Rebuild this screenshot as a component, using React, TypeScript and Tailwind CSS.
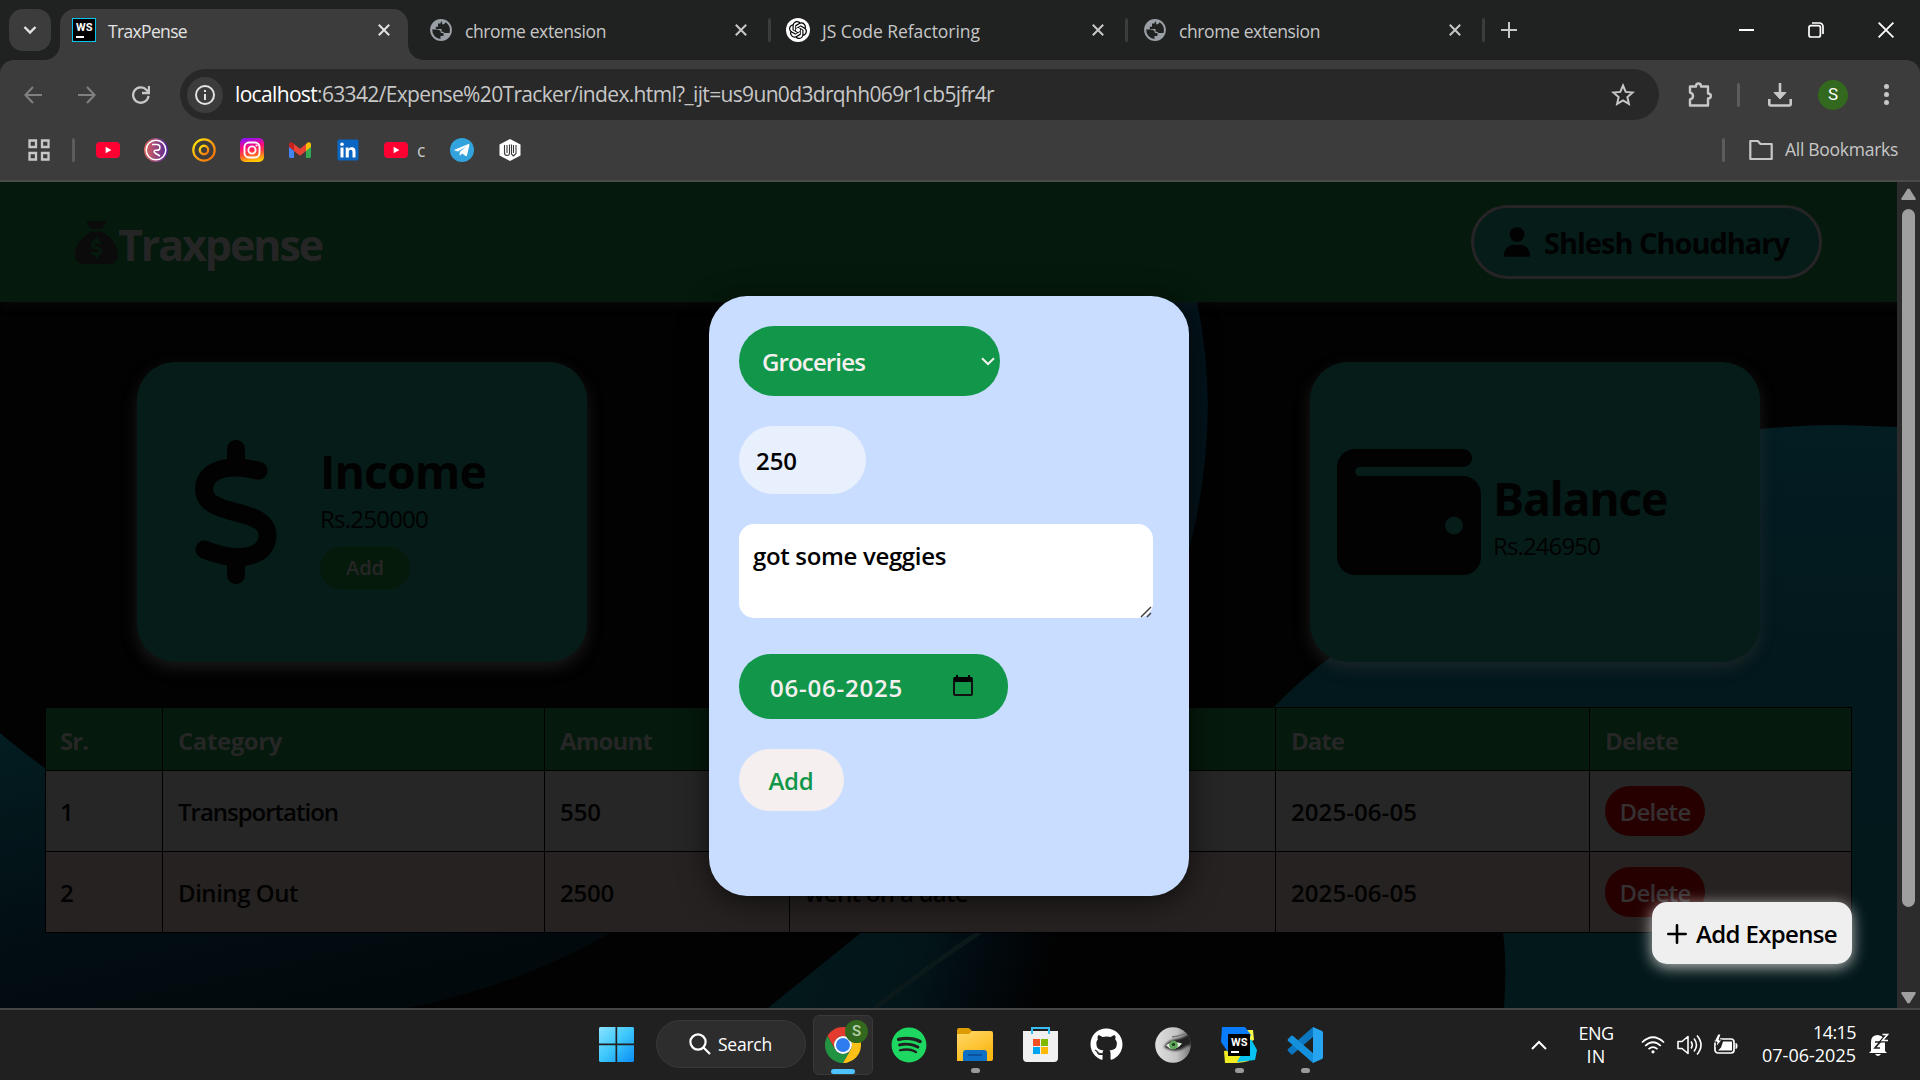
import React, { useLayoutEffect, useRef, useState } from "react";
import { FaSackDollar, FaDollarSign, FaWallet, FaUser, FaSpotify, FaGithub } from "react-icons/fa6";
import { SiOpenai } from "react-icons/si";

/** One line of text, tracked so that it fills the given width. */
function Line({ w, className = "", children }: { w: number; className?: string; children: React.ReactNode }) {
  const ref = useRef<HTMLSpanElement>(null);
  const [spacing, setSpacing] = useState(0);
  useLayoutEffect(() => {
    const el = ref.current;
    if (!el) return;
    const n = (el.textContent || "").length;
    if (n > 1) setSpacing((w - el.getBoundingClientRect().width) / n);
  }, [w]);
  return (
    <span className={"inline-block whitespace-nowrap " + className}>
      <span ref={ref} style={{ letterSpacing: spacing }}>
        {children}
      </span>
    </span>
  );
}

function WebStormIcon({ className }: { className: string }) {
  return (
    <span className={"flex flex-col justify-between bg-black text-white " + className}>
      <span className="font-[Roboto] text-[11px] font-bold leading-[11px]">WS</span>
      <span className="h-[2px] w-[8px] bg-white" />
    </span>
  );
}

function Globe() {
  return (
    <svg viewBox="0 0 24 24" className="size-6">
      <circle cx="12" cy="12" r="10.900" fill="#9aa0a6" />
      <path d="M3.200 11.500h4.300c2.300 0 4.500 1 4.500 3.500h2.500v3h-3v2.900a9 9 0 0 1-8.300-9.400zM12.500 3.100c-1 1.200-1 2.400-1 2.400H9v3.200H6.800v2.300h5.700v2.500c1.500 0 2.500.8 3 1.500h5c.3-1 .4-2 .4-3a9 9 0 0 0-4.400-7.700c-.3 1.200-1.500 2.200-3 2.200z" fill="#202221" />
    </svg>
  );
}

function Cross({ className }: { className: string }) {
  return (
    <svg viewBox="0 0 12 12" className={className} fill="none" stroke="currentColor">
      <path d="M.8.8l10.4 10.4M11.2.8L.8 11.2" strokeWidth="2" />
    </svg>
  );
}

function Tab({ icon, title, w, active = false, sep = false }: { icon: React.ReactNode; title: string; w: number; active?: boolean; sep?: boolean }) {
  return (
    <div className={"relative flex h-[51px] w-[348px] shrink-0 items-center pl-3 " + (active ? "rounded-t-[15px] bg-[#3c3c3c] text-[#e3e3e3]" : "text-[#c7c7c7]")}>
      <span className="-mt-[9px] flex size-6 items-center justify-center">{icon}</span>
      <Line w={w} className="-mt-[7px] ml-3 w-[260px] text-[17.5px] leading-6">{title}</Line>
      <Cross className="-mt-[9px] ml-[10px] size-3" />
      {active && (
        <>
          <span className="absolute bottom-0 -left-[15px] size-[15px] bg-[radial-gradient(circle_at_0_0,transparent_14.5px,#3c3c3c_15px)]" />
          <span className="absolute -right-[15px] bottom-0 size-[15px] bg-[radial-gradient(circle_at_100%_0,transparent_14.5px,#3c3c3c_15px)]" />
        </>
      )}
      {sep && <span className="absolute -right-[6px] top-[9px] h-6 w-[3px] rounded bg-[#3c3c3c]" />}
    </div>
  );
}

function TabStrip() {
  return (
    <div className="flex h-[60px] items-end bg-[#202221] pl-[9px] pr-[26px]">
      <div className="mb-[9px] mr-[9px] flex size-[42px] items-center justify-center rounded-[14px] bg-[#3c3c3c]">
        <svg viewBox="0 0 14 10" className="h-[10px] w-[14px]" fill="none" stroke="#e3e3e3" strokeWidth="2.4"><path d="M1.5 2L7 7.5 12.5 2" /></svg>
      </div>
      <div className="flex gap-[9px]">
        <Tab active w={79} title="TraxPense" icon={<WebStormIcon className="size-6 border border-[#07c3f2] px-[3px] pb-[3px] pt-[3px]" />} />
        <Tab sep w={141} title="chrome extension" icon={<Globe />} />
        <Tab sep w={158} title="JS Code Refactoring" icon={<span className="flex size-6 items-center justify-center rounded-full bg-white"><SiOpenai className="size-[18px] text-black" /></span>} />
        <Tab sep w={141} title="chrome extension" icon={<Globe />} />
      </div>
      <svg viewBox="0 0 16 16" className="mb-[22px] ml-[22px] size-4" stroke="#c7c7c7" strokeWidth="2"><path d="M8 0v16M0 8h16" /></svg>
      <div className="mb-[22px] ml-auto flex items-center gap-[54px]">
        <span className="h-[2px] w-[15px] bg-white" />
        <svg viewBox="0 0 16 16" className="size-4" fill="none" stroke="#fff" strokeWidth="1.7"><rect x="1" y="3.6" width="11.4" height="11.4" rx="2" /><path d="M4 1h7.5A3.5 3.5 0 0 1 15 4.500V12" /></svg>
        <svg viewBox="0 0 16 16" className="size-4" stroke="#fff" strokeWidth="1.8"><path d="M.6.6l14.800 14.800M15.400.6L.6 15.400" /></svg>
      </div>
    </div>
  );
}

function Toolbar() {
  return (
    <div className="flex h-[69px] items-center pl-6 pr-[31px]">
      <svg viewBox="0 0 18 18" className="size-[18px]" fill="none" stroke="#808080" strokeWidth="2"><path d="M18 9H1.500M9 1L1.400 9 9 17" /></svg>
      <svg viewBox="0 0 18 18" className="ml-9 size-[18px]" fill="none" stroke="#808080" strokeWidth="2"><path d="M0 9h16.500M9 1l7.600 8L9 17" /></svg>
      <svg viewBox="0 0 18 18" className="ml-9 size-[18px]" fill="none" stroke="#c7c7c7" strokeWidth="2.300"><path d="M16.500 9.800A7.700 7.700 0 1 1 14.600 3.900L16.500 6" /><path d="M17 0v7h-7" /></svg>
      <div className="ml-[30px] flex h-[51px] w-[1479px] items-center rounded-full bg-[#282828] pl-2">
        <span className="-ml-[1px] flex size-9 items-center justify-center rounded-full bg-[#3c3c3c]">
          <svg viewBox="0 0 20 20" className="size-5" fill="none" stroke="#e3e3e3" strokeWidth="2"><circle cx="10" cy="10" r="9" /><path d="M10 9v6M10 5v2" /></svg>
        </span>
        <Line w={759} className="-mt-[1px] ml-3 text-[21px] leading-7 text-[#c7c7c7]"><b className="font-normal text-white">localhost</b>:63342/Expense%20Tracker/index.html?_ijt=us9un0d3drqhh069r1cb5jfr4r</Line>
        <svg viewBox="0 0 24 24" className="ml-auto mr-6 size-6" fill="none" stroke="#c7c7c7" strokeWidth="2"><path d="M12 2.500l2.700 6.400 6.900.6-5.200 4.600 1.500 6.800-5.900-3.600-5.900 3.600 1.500-6.800-5.200-4.600 6.900-.6z" /></svg>
      </div>
      <svg viewBox="0 0 26 26" className="ml-[28px] size-[26px]" fill="none" stroke="#c7c7c7" strokeWidth="2.400"><path d="M3 4.500h6c0-4 5-4 5 0h7v7c3.800 0 3.800 5 0 5v7H3v-6c4-1 4-6 0-7z" strokeLinejoin="round" /></svg>
      <span className="ml-[24px] h-6 w-[3px] rounded bg-[#5c5c5c]" />
      <svg viewBox="0 0 24 24" className="ml-[28px] size-6" fill="none" stroke="#c7c7c7" strokeWidth="2.600"><path d="M12 0v14" /><path d="M6 9.500h12l-6 6.500z" fill="#c7c7c7" strokeWidth="1" /><path d="M1.300 16v5q0 1.500 1.500 1.500h18.400q1.500 0 1.500-1.500v-5" /></svg>
      <span className="ml-[26px] flex size-[30px] items-center justify-center rounded-full bg-[#33691e] font-[Roboto] text-[17px] text-white">S</span>
      <span className="ml-auto flex flex-col gap-[3px]">
        <i className="size-[5px] rounded-full bg-[#c7c7c7]" /><i className="size-[5px] rounded-full bg-[#c7c7c7]" /><i className="size-[5px] rounded-full bg-[#c7c7c7]" />
      </span>
    </div>
  );
}

function YouTube() {
  return (
    <svg viewBox="0 0 24 24" className="size-6"><rect y="4" width="24" height="16" rx="4" fill="#ff0033" /><path d="M9.600 8.700v6.600l5.800-3.300z" fill="#fff" /></svg>
  );
}

function Bookmarks() {
  return (
    <div className="flex h-[42px] items-center pl-7 pr-[22px]">
      <svg viewBox="0 0 22 22" className="size-[22px]" fill="none" stroke="#c7c7c7" strokeWidth="2.300"><path d="M1.500 1.500h6.500v6.500H1.500zM14 1.500h6.500v6.500H14zM1.500 14h6.500v6.500H1.500zM14 14h6.500v6.500H14z" /></svg>
      <span className="ml-[22px] h-6 w-[3px] rounded bg-[#5c5c5c]" />
      <div className="ml-[21px] flex items-center gap-6">
        <YouTube />
        <svg viewBox="0 0 24 24" className="size-6">
          <defs><linearGradient id="bmR"><stop stopColor="#e2675c" /><stop offset="1" stopColor="#52269b" /></linearGradient></defs>
          <circle cx="12" cy="12" r="12" fill="url(#bmR)" />
          <g fill="none" stroke="#fff" strokeWidth="1.500"><circle cx="12" cy="12" r="9.800" /><path d="M8 6.500h5a2.900 2.900 0 0 1 0 5.800h-1.500c-1.500 0-2 1.700-.5 2.700l5 3" /></g>
        </svg>
        <svg viewBox="0 0 24 24" className="size-6" fill="none">
          <defs><linearGradient id="bmO" x2="1" y2="1"><stop stopColor="#fff200" /><stop offset=".5" stopColor="#fba014" /><stop offset="1" stopColor="#f06a00" /></linearGradient></defs>
          <circle cx="12" cy="12" r="10.700" stroke="url(#bmO)" strokeWidth="2.200" /><circle cx="12" cy="12" r="4.200" stroke="url(#bmO)" strokeWidth="2.400" />
        </svg>
        <svg viewBox="0 0 24 24" className="size-6" fill="none">
          <defs><linearGradient id="bmI" x1=".2" y1="0" x2=".4" y2="1"><stop stopColor="#8a12ff" /><stop offset=".4" stopColor="#ff0a78" /><stop offset=".7" stopColor="#ff5430" /><stop offset="1" stopColor="#ffc800" /></linearGradient></defs>
          <rect width="24" height="24" rx="5" fill="url(#bmI)" />
          <g stroke="#fff" strokeWidth="1.900"><rect x="4.500" y="4.500" width="15" height="15" rx="4.500" /><circle cx="12" cy="12" r="3.600" /></g><circle cx="16.500" cy="7.500" r="1.100" fill="#fff" />
        </svg>
        <svg viewBox="0 0 24 24" className="size-6">
          <path d="M1 7v11.500c0 .8.700 1.500 1.500 1.500H6V9.500z" fill="#4285f4" /><path d="M23 7v11.500c0 .8-.7 1.500-1.500 1.500H18V9.500z" fill="#34a853" />
          <path d="M18 6l1.500-1.200C21 3.700 23 4.700 23 6.500V9l-5 4z" fill="#fbbc04" /><path d="M1 6.500C1 4.700 3 3.700 4.500 4.800L6 6v7L1 9z" fill="#c5221f" /><path d="M6 13V6l6 4.800L18 6v7l-6 4.800z" fill="#ea4335" />
        </svg>
        <svg viewBox="0 0 24 24" className="size-6">
          <rect x="1.500" y="1.500" width="21" height="21" rx="1.500" fill="#0a66c2" /><g fill="#fff"><rect x="4.500" y="9.500" width="3" height="10" /><circle cx="6" cy="6.200" r="1.800" /><path d="M9.700 9.500h2.900v1.400c.6-1 1.700-1.700 3.100-1.700 3 0 3.800 1.900 3.800 4.700v5.600h-3v-5c0-1.400-.2-2.700-1.800-2.700-1.500 0-1.900 1.200-1.900 2.600v5.100H9.700z" /></g>
        </svg>
        <span className="flex items-center"><YouTube /><span className="ml-[9px] w-[9px] text-[17.5px] leading-6 text-[#c7c7c7]">c</span></span>
        <svg viewBox="0 0 24 24" className="size-6"><circle cx="12" cy="12" r="12" fill="#32a3dc" /><path d="M4.500 11.800L18.500 6c.7-.2 1 .2.900.9L17 17.500c-.2.7-.7.900-1.300.6l-3.600-2.700-1.800 1.800c-.4.400-.7.200-.8-.2l.4-3.300L16 8.500l-8 5-3.300-1c-.5-.2-.6-.5-.2-.7z" fill="#fff" /></svg>
        <svg viewBox="0 0 24 24" className="size-6"><path d="M12 1l10.500 5.500v11L12 23 1.500 17.500v-11z" fill="#fff" /><path d="M6.500 7v7.500q0 3 2.500 3t2.500-2.500V6.500M9 7v8M13.500 6.500V16l2 2 2.500-2.500V7M15.500 7v8" fill="none" stroke="#3a3a3a" strokeWidth="1.100" /></svg>
      </div>
      <span className="ml-auto h-6 w-[3px] rounded bg-[#5c5c5c]" />
      <svg viewBox="0 0 24 22" className="ml-6 h-[22px] w-6" fill="none" stroke="#c7c7c7" strokeWidth="2.200" strokeLinejoin="round"><path d="M1.300 2h7.500l2.700 3h11.200v15H1.300z" /></svg>
      <Line w={113} className="-mt-[2px] ml-3 w-[113px] text-[17.5px] leading-6 text-[#c7c7c7]">All Bookmarks</Line>
    </div>
  );
}

function Backdrop() {
  return (
    <svg viewBox="0 182 1897 826" className="absolute inset-0 h-[826px] w-[1897px]">
      <defs>
        <linearGradient id="bgA" x1="0" y1="0" x2=".5" y2="1"><stop stopColor="#031d20" /><stop offset=".3" stopColor="#03161a" /><stop offset=".65" stopColor="#020d13" /><stop offset="1" stopColor="#02090c" /></linearGradient>
        <linearGradient id="bgB" gradientUnits="userSpaceOnUse" x1="820" y1="932" x2="1040" y2="1000"><stop stopColor="#03181b" /><stop offset=".45" stopColor="#031519" /><stop offset=".65" stopColor="#020c12" /><stop offset="1" stopColor="#020202" /></linearGradient>
        <linearGradient id="bgC" x2="0" y2="1"><stop stopColor="#031d22" /><stop offset=".4" stopColor="#03181c" /><stop offset="1" stopColor="#03181a" /></linearGradient>
      </defs>
      <path d="M0 733Q20 750 46 769L80 800V932H612Q520 985 408 1008H0Z" fill="url(#bgA)" />
      <path d="M862 932L768 1008H1030L1080 932Z" fill="url(#bgB)" />
      <path d="M980 932Q930 965 875 1008" stroke="#0b191a" strokeWidth="5" fill="none" />
      <path d="M1274 707Q1300 680 1332 656Q1520 510 1760 429Q1800 425 1840 425L1897 427V1008H1504Q1507 960 1503 932V707Z" fill="url(#bgC)" />
      <path d="M1170 302H1197Q1222 420 1189 550L1170 600Z" fill="#03131a" />
    </svg>
  );
}

function Header() {
  return (
    <header className="relative flex h-[120px] items-center justify-between bg-[#05190c] pl-[75px] pr-[75px] shadow-[0_4px_10px_rgba(40,40,40,0.2)]">
      <div className="flex items-center">
        <FaSackDollar className="size-[43px] text-[#0b0b0b]" />
        <Line w={204} className="mt-[5px] text-[43px] font-bold leading-[60px] text-[#262526]">Traxpense</Line>
      </div>
      <div className="flex h-[74px] w-[351px] items-center rounded-[37px] border-[3px] border-[#262426] bg-[#061c19] pl-[30px] text-[#020202]">
        <FaUser className="h-[30px] w-[26px]" />
        <Line w={245} className="ml-[14px] mt-[2px] text-[29px] font-bold leading-10">Shlesh Choudhary</Line>
      </div>
    </header>
  );
}

function Card({ icon, title, w, amount, aw, action = false }: { icon: React.ReactNode; title: string; w: number; amount: string; aw: number; action?: boolean }) {
  return (
    <section className="flex h-[300px] w-[450px] items-center gap-3 rounded-[38px] bg-[#061c19] pl-[27px] text-[#020202] shadow-[0_6px_16px_rgba(60,58,58,0.42)]">
      <span className="flex size-36 items-center justify-center">{icon}</span>
      <div className="flex flex-col items-start">
        <Line w={w} className="mt-[4px] text-[46.5px] font-bold leading-[62px]">{title}</Line>
        <Line w={aw} className="text-[24px] leading-[33px]">{amount}</Line>
        {action && (
          <button className="mt-[12px] flex h-[42px] w-[90px] items-center justify-center rounded-[21px] bg-[#061a0c]">
            <Line w={38} className="text-[20px] font-semibold leading-7 text-[#262626]">Add</Line>
          </button>
        )}
      </div>
    </section>
  );
}

const rows = [
  { sr: "1", category: "Transportation", cw: 160, amount: "550", aw: 41, note: "", date: "2025-06-05", bg: "bg-[#262626]" },
  { sr: "2", category: "Dining Out", cw: 120, amount: "2500", aw: 54, note: "went on a date", date: "2025-06-05", bg: "bg-[#262221]" },
];

function ExpenseTable() {
  const cols = "grid grid-cols-[117px_382px_245px_486px_314px_261px] divide-x divide-black";
  return (
    <div className="ml-[45px] w-[1807px] border border-black text-[24px]">
      <div className={cols + " h-[62px] bg-[#05190c] font-bold text-[#262626] *:flex *:items-center *:pl-[15px] *:pt-[3px]"}>
        <div><Line w={28} className="-ml-px">Sr.</Line></div>
        <div><Line w={104}>Category</Line></div>
        <div><Line w={92}>Amount</Line></div>
        <div><Line w={130}>Description</Line></div>
        <div><Line w={53}>Date</Line></div>
        <div><Line w={73}>Delete</Line></div>
      </div>
      {rows.map((r) => (
        <div key={r.sr} className={cols + " h-[81px] border-t border-black font-semibold text-[#020202] *:flex *:items-center *:pl-[15px] *:pt-[2px] " + r.bg}>
          <div><span className="-ml-px">{r.sr}</span></div>
          <div><Line w={r.cw}>{r.category}</Line></div>
          <div><Line w={r.aw}>{r.amount}</Line></div>
          <div><Line w={163}>{r.note}</Line></div>
          <div><Line w={126}>{r.date}</Line></div>
          <div>
            <button className="mb-[2px] flex h-[50px] w-[100px] items-center justify-center rounded-[25px] bg-[#260000]">
              <Line w={71} className="mt-[2px] font-semibold text-[#353031]">Delete</Line>
            </button>
          </div>
        </div>
      ))}
    </div>
  );
}

function ExpenseForm() {
  return (
    <form className="absolute left-[709px] top-[114px] flex h-[600px] w-[480px] flex-col items-start rounded-[38px] bg-[#c8ddff] pl-[30px] pt-[30px] text-[24px] font-semibold shadow-[0_6px_30px_rgba(0,0,0,0.6)]">
      <div className="flex h-[70px] w-[261px] items-center rounded-[35px] bg-[#12974a] pl-[23px] pt-[2px] text-[#f5f0ef]">
        <Line w={103}>Groceries</Line>
        <svg viewBox="0 0 14 9" className="-mt-[2px] ml-auto mr-[5px] h-[9px] w-[14px]" fill="none" stroke="#f5f0ef" strokeWidth="2"><path d="M1 1.300l6 5.700 6-5.700" /></svg>
      </div>
      <div className="mt-[30px] flex h-[68px] w-[127px] items-center rounded-[34px] bg-[#e8f0fe] pl-[17px] pt-[2px] text-black"><Line w={41}>250</Line></div>
      <div className="relative mt-[30px] h-[94px] w-[414px] rounded-[15px] bg-white pl-[14px] pt-[15px] leading-[33px] text-black">
        <Line w={193}>got some veggies</Line>
        <svg viewBox="0 0 12 12" className="absolute bottom-0 right-[1px] size-3" stroke="#444" strokeWidth="1.500"><path d="M1 11L11 1M7 11l4-4" /></svg>
      </div>
      <div className="mt-[36px] flex h-[65px] w-[269px] items-center rounded-[32px] bg-[#12974a] pl-[31px] pt-[2px] text-[#f5f0ef]">
        <Line w={133}>06-06-2025</Line>
        <svg viewBox="0 0 20 21" className="-mt-[4px] ml-auto mr-[35px] h-[21px] w-5"><rect x="1" y="3" width="18" height="17" rx="1" fill="none" stroke="#111" strokeWidth="2" /><path d="M1 2h18v5H1zM3 0h2v3H3zM15 0h2v3h-2z" fill="#000" /></svg>
      </div>
      <button className="mt-[30px] flex h-[62px] w-[105px] items-center justify-center rounded-[31px] bg-[#f5f0ef] pr-px pt-[2px] font-semibold text-[#12974a]"><Line w={45}>Add</Line></button>
    </form>
  );
}

function Scrollbar() {
  return (
    <div className="flex h-[826px] w-[23px] flex-col items-center bg-[#2c2c2c] pb-[4px] pt-[6px]">
      <svg viewBox="0 0 15 12" className="h-3 w-[15px]" fill="#9f9f9f"><path d="M6.500.8h2L15 11l-1 1H1l-1-1z" /></svg>
      <span className="mt-[9px] h-[698px] w-[13px] rounded-full bg-[#9f9f9f]" />
      <svg viewBox="0 0 15 12" className="mt-auto h-3 w-[15px]" fill="#9f9f9f"><path d="M6.500 11.200h2L15 1l-1-1H1L0 1z" /></svg>
    </div>
  );
}

function Slot({ children, dot = false }: { children: React.ReactNode; dot?: boolean }) {
  return (
    <div className="relative flex h-full w-[66px] items-center justify-center pb-px">
      {children}
      {dot && <span className="absolute bottom-[7px] h-[5px] w-[9px] rounded-full bg-[#9a9a9a]" />}
    </div>
  );
}

function Taskbar() {
  return (
    <footer className="flex h-[72px] border-t-2 border-[#464646] bg-[#202020] pl-[583px] text-white">
      <Slot>
        <svg viewBox="0 0 35 35" className="size-[35px]">
          <defs><linearGradient id="win" x2="1" y2="1"><stop stopColor="#8ae3ff" /><stop offset=".5" stopColor="#3cc6fb" /><stop offset="1" stopColor="#0a8ef5" /></linearGradient></defs>
          <path d="M1 0h15.500v16.500H0V1zM18.200 0H34l1 1v15.500H18.200zM0 18.200h16.500V35H1l-1-1zM18.200 18.200H35V34l-1 1H18.200z" fill="url(#win)" />
        </svg>
      </Slot>
      <div className="ml-[7px] mt-[10px] flex h-12 w-[150px] items-center rounded-full border border-[#383838] bg-[#2d2d2d] pl-[32px]">
        <svg viewBox="0 0 22 22" className="size-[22px]" fill="none" stroke="#fff" strokeWidth="2.200"><circle cx="9" cy="9" r="7.600" /><path d="M14.500 14.500L21 21" /></svg>
        <Line w={54} className="ml-[7px] text-[17.500px] leading-6">Search</Line>
      </div>
      <div className="ml-[4px] flex h-full">
        <Slot>
          <div className="relative flex h-[60px] w-[60px] items-center justify-center rounded-md border border-[#393939] bg-[#2d2d2d]">
            <svg viewBox="2 2 44 44" className="size-9">
              <path d="M24 13H43.050A22 22 0 0 0 4.950 13L14.470 29.500A11 11 0 0 1 24 13Z" fill="#e33b2e" />
              <path d="M14.470 29.500L4.950 13A22 22 0 0 0 24 46L33.530 29.500A11 11 0 0 1 14.470 29.500Z" fill="#229342" />
              <path d="M33.530 29.500L24 46A22 22 0 0 0 43.050 13H24A11 11 0 0 1 33.530 29.500Z" fill="#fbc116" />
              <circle cx="24" cy="24" r="11" fill="#fff" /><circle cx="24" cy="24" r="8.600" fill="#2f7bf0" />
            </svg>
            <span className="absolute right-[4px] top-[4px] flex size-[23px] items-center justify-center rounded-full bg-[#33691e] font-[Roboto] text-[15px] font-medium text-[#b9d3ac]">S</span>
            <span className="absolute bottom-0 h-[5px] w-6 rounded-full bg-[#4cc2ff]" />
          </div>
        </Slot>
        <Slot><FaSpotify className="size-9 text-[#1ed760]" /></Slot>
        <Slot dot>
          <svg viewBox="0 0 36 34" className="h-[34px] w-9">
            <defs><linearGradient id="fold" y2="1" x2=".6"><stop stopColor="#ffd968" /><stop offset="1" stopColor="#fbb612" /></linearGradient></defs>
            <path d="M0 2q0-2 2-2h9q1 0 2 1l2 2h19v10H0z" fill="#dd9b04" /><path d="M0 6h12l3-3h19q2 0 2 2v26q0 2-2 2H0z" fill="url(#fold)" />
            <path d="M6 33v-8q0-3 3-3h18q3 0 3 3v8z" fill="#0f6fc4" /><path d="M11 27h14" stroke="#0a4a8c" strokeWidth="1.500" />
          </svg>
        </Slot>
        <Slot>
          <svg viewBox="0 0 35 35" className="mr-px size-[35px]">
            <path d="M9 7V1h17v6" fill="none" stroke="#38bdf2" strokeWidth="2" /><path d="M0 4h35v27q0 4-4 4H4q-4 0-4-4z" fill="#f0f0f0" />
            <path d="M9 7V4M26 7V4" stroke="#38bdf2" strokeWidth="2" />
            <rect x="10" y="12" width="7" height="7" fill="#f25022" /><rect x="18" y="12" width="7" height="7" fill="#7fba00" /><rect x="10" y="20" width="7" height="7" fill="#00a4ef" /><rect x="18" y="20" width="7" height="7" fill="#ffb900" />
          </svg>
        </Slot>
        <Slot><FaGithub className="mr-px size-[33px]" /></Slot>
        <Slot>
          <svg viewBox="0 0 36 36" className="size-9">
            <defs><clipPath id="eyeClip"><circle cx="18" cy="18" r="17.800" /></clipPath><linearGradient id="eyeBg"><stop stopColor="#e0e0e0" /><stop offset=".6" stopColor="#c4c4c4" /><stop offset="1" stopColor="#777" /></linearGradient><filter id="eyeSoft"><feGaussianBlur stdDeviation=".9" /></filter></defs>
            <g clipPath="url(#eyeClip)"><rect width="36" height="36" fill="url(#eyeBg)" /><path d="M9 20q4-7 12-8 8-1 16-7v13q-5 0-8 3-8 5-16 1z" fill="#222" filter="url(#eyeSoft)" /><path d="M17 10q10-1 18-6" stroke="#777" strokeWidth="1.500" fill="none" /><path d="M11 18.500q6-6 16-2-5 6.500-12 5z" fill="#e3f0df" /><circle cx="18.500" cy="18" r="4.400" fill="#5fa55a" /><circle cx="18.500" cy="17.500" r="1.600" fill="#183a18" /></g>
          </svg>
        </Slot>
        <Slot dot>
          <span className="relative flex size-9 items-center justify-center">
            <svg viewBox="0 0 36 36" className="absolute inset-0 size-9"><path d="M24 3h8l1 10-7 3z" fill="#fcf84a" /><path d="M3 24l16-2 9 12q-12 3-24 2z" fill="#f1ec22" /><path d="M1 0h23l6 8-9 18-14-1-7-10z" fill="#087cfa" /><path d="M30 12l6 11-2 10-18 2 8-14z" fill="#07c3f2" /></svg>
            <WebStormIcon className="relative size-[22px] p-[3px]" />
          </span>
        </Slot>
        <Slot dot>
          <svg viewBox="0 0 36 36" className="size-9"><path d="M26 0L27 9 6 27q-1 1-2 0l-3-3q-1-1 0-2z" fill="#0b77c0" /><path d="M26 36l1-9L6 9Q5 8 4 9l-3 3q-1 1 0 2z" fill="#1590dc" /><path d="M26 0l9 4q1 .5 1 2v24q0 1.500-1 2l-9 4z" fill="#26a4f0" /></svg>
        </Slot>
      </div>
      <div className="ml-auto flex items-center pr-[30px] text-[18px] leading-6">
        <svg viewBox="0 0 16 10" className="h-[10px] w-4" fill="none" stroke="#fff" strokeWidth="2"><path d="M1 9l7-7 7 7" /></svg>
        <div className="ml-[31px] flex w-[36px] flex-col items-center pb-[1px] leading-[23px]"><Line w={35}>ENG</Line><Line w={19}>IN</Line></div>
        <svg viewBox="0 0 24 18" className="ml-[27px] h-[18px] w-6" fill="none" stroke="#fff" strokeWidth="1.700"><path d="M1 6.500q11-10.500 22 0M4.200 10q7.800-7.500 15.600 0M7.500 13.200q4.500-4 9 0" /><circle cx="12" cy="15.800" r="1.600" fill="#fff" stroke="none" /></svg>
        <svg viewBox="0 0 25 22" className="ml-3 h-[22px] w-[25px]" fill="none" stroke="#fff" strokeWidth="1.600"><path d="M1 7.500h4l6-5v17l-6-5H1z" strokeLinejoin="round" /><path d="M14 7.500q2.500 3.500 0 7M17 4.500q5 6.500 0 13M20 1.500q8 9.500 0 19" /></svg>
        <svg viewBox="0 0 25 22" className="ml-[11px] h-[22px] w-[25px]"><rect x="2" y="5" width="19" height="14" rx="3" fill="none" stroke="#fff" strokeWidth="1.700" /><path d="M10 7.500h9v9H5l3-3z" fill="#fff" /><path d="M22.500 9q2 0 2 3t-2 3z" fill="#fff" /><path d="M5 0L1 8h3l-1 5 6-7H6l2-6z" fill="#fff" stroke="#202020" /></svg>
        <div className="ml-[24px] flex w-[94px] flex-col items-end pb-[3px] leading-[23px]"><Line w={43}>14:15</Line><Line w={94}>07-06-2025</Line></div>
        <svg viewBox="0 0 22 24" className="ml-[12px] h-6 w-[22px]"><path d="M3 18V9q0-7 7-7 7 1 7 8v8l2 2H1z" fill="#fff" /><path d="M7 21h6q-3 4-6 0z" fill="#fff" /><path d="M7 9h5l-5 6h5" fill="none" stroke="#202020" strokeWidth="1.700" /><path d="M14.500 1.500h5l-5 6h5.500" fill="none" stroke="#202020" strokeWidth="4" /><path d="M14.500 1.500h5l-5 6h5.500" fill="none" stroke="#fff" strokeWidth="1.600" /></svg>
      </div>
    </footer>
  );
}

export default function App() {
  return (
    <div className="flex h-[1080px] w-[1920px] flex-col overflow-hidden bg-[#202221] font-['Open_Sans',sans-serif]">
      <TabStrip />
      <div className="h-[122px] rounded-t-[14px] border-b-2 border-[#4a4a4a] bg-[#3c3c3c]">
        <Toolbar />
        <Bookmarks />
      </div>
      <div className="flex h-[826px]">
        <main className="relative h-[826px] w-[1897px] overflow-hidden bg-[#020202]">
          <Backdrop />
          <div className="relative">
            <Header />
            <div className="flex justify-between pl-[137px] pr-[137px] pt-[60px]">
              <Card icon={<FaDollarSign className="h-36 w-[90px]" />} title="Income" w={166} amount="Rs.250000" aw={108} action />
              <Card icon={<FaWallet className="size-36" />} title="Balance" w={174} amount="Rs.246950" aw={107} />
            </div>
            <div className="pt-[45px]"><ExpenseTable /></div>
          </div>
          <ExpenseForm />
          <button className="absolute left-[1652px] top-[720px] flex h-[62px] w-[200px] items-center rounded-[15px] bg-[#efefef] pl-[15px] text-[24px] font-semibold text-black shadow-[0_3px_15px_rgba(255,250,250,0.75)]">
            <svg viewBox="0 0 20 20" className="mt-[2px] size-5" stroke="#000" strokeWidth="2.600" strokeLinecap="round"><path d="M10 1.300v17.400M1.300 10h17.400" /></svg>
            <Line w={141} className="ml-[9px] mt-[2px]">Add Expense</Line>
          </button>
        </main>
        <Scrollbar />
      </div>
      <Taskbar />
    </div>
  );
}
